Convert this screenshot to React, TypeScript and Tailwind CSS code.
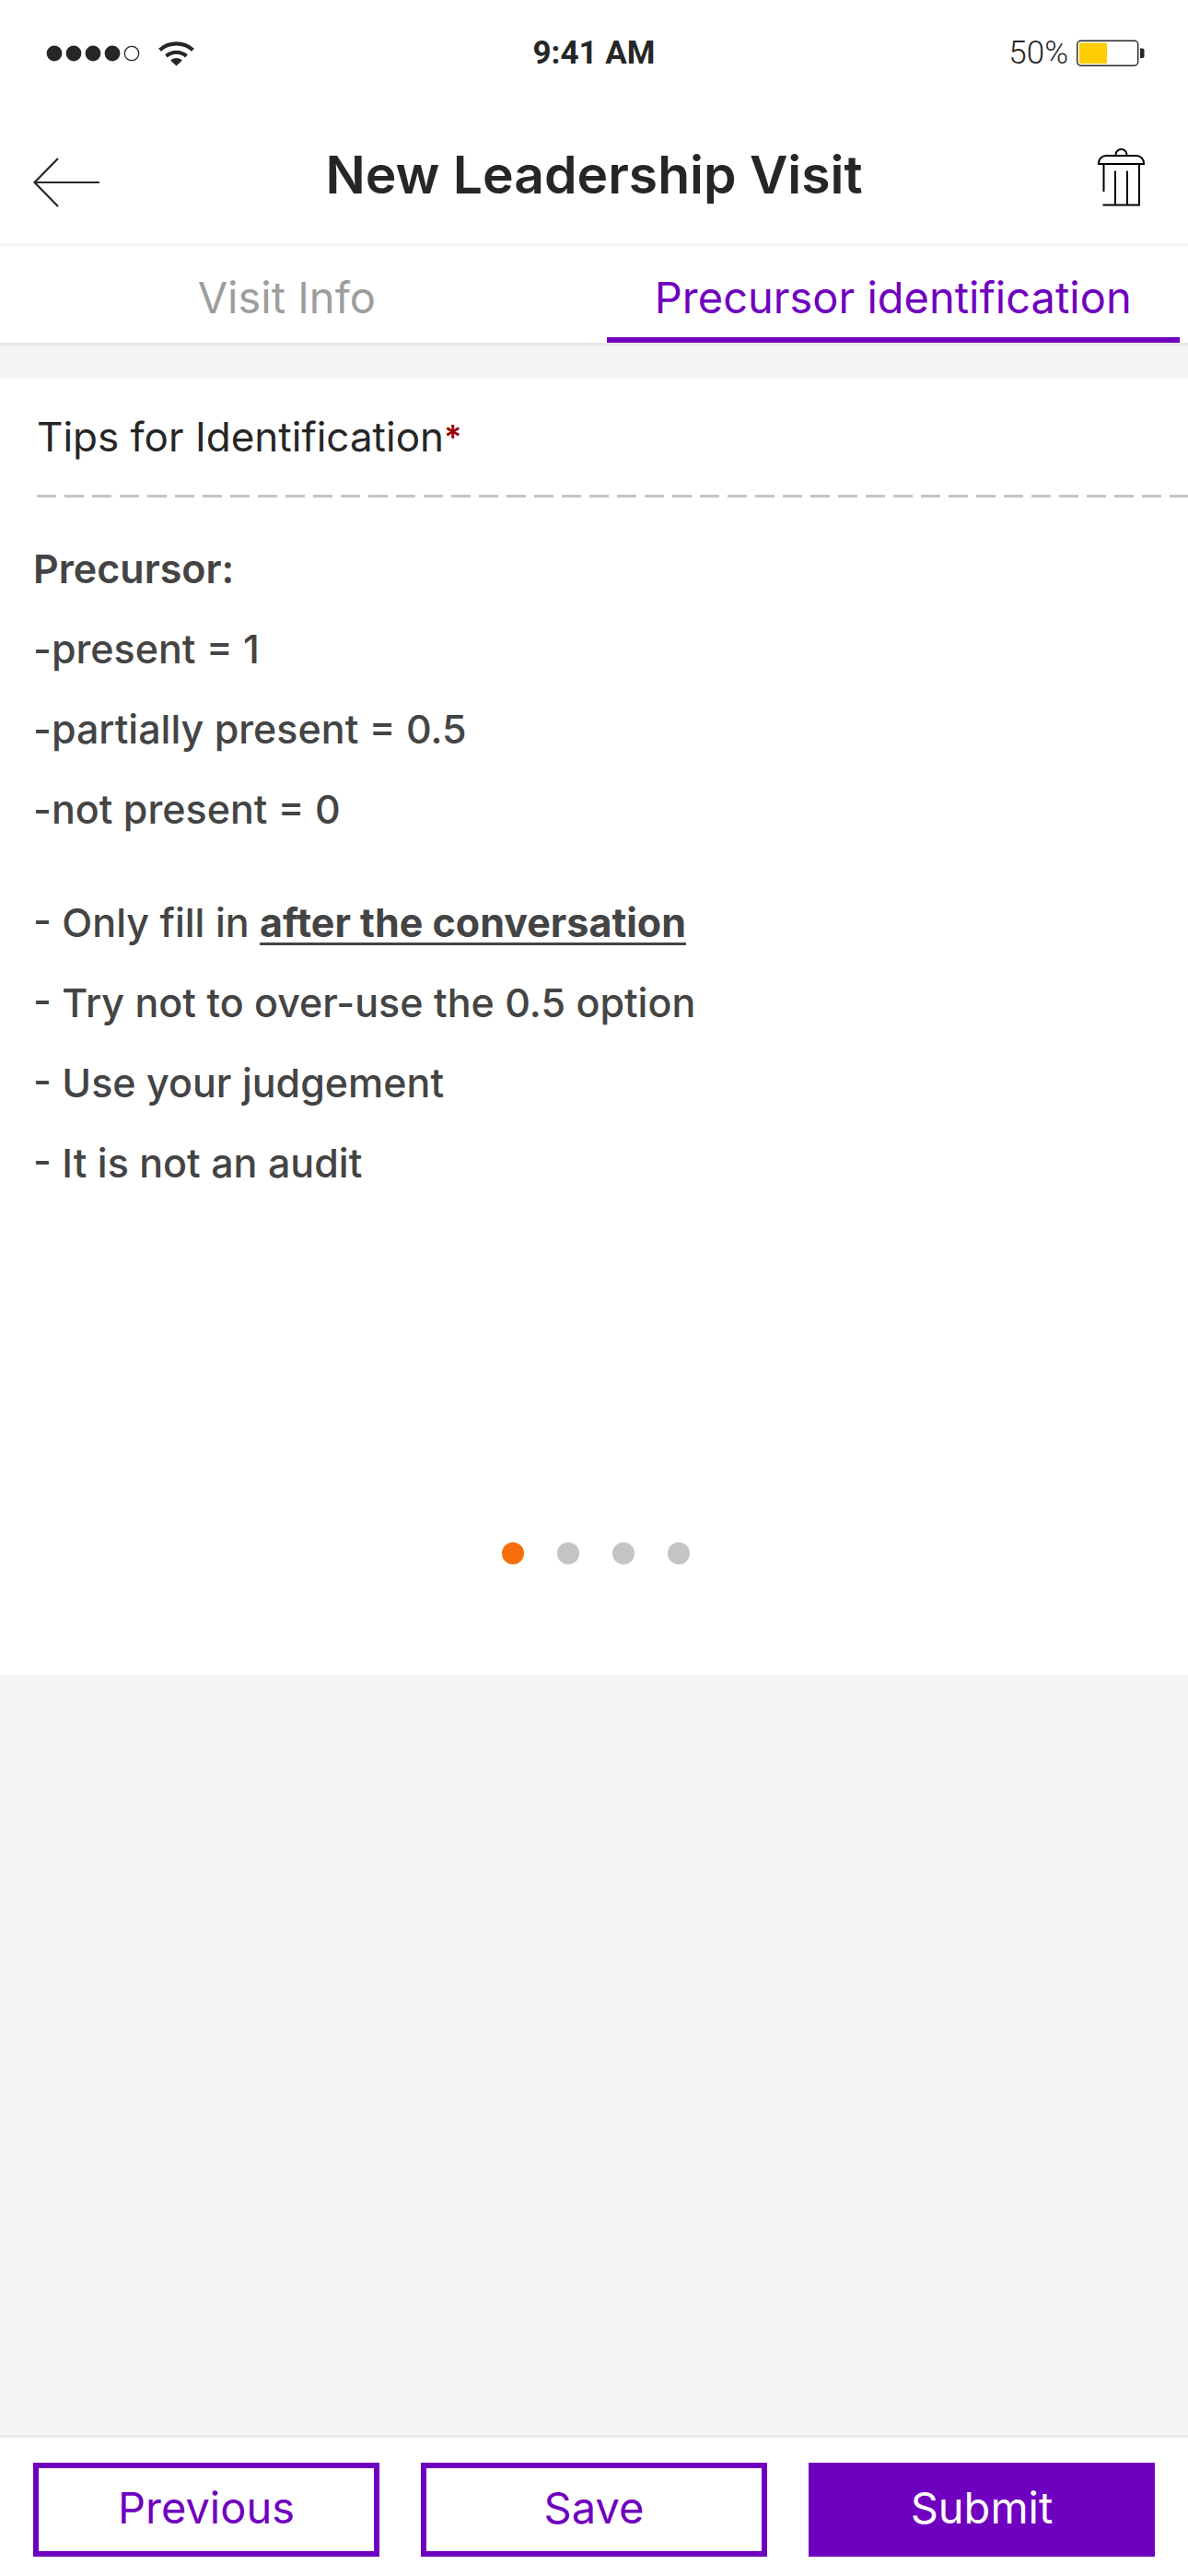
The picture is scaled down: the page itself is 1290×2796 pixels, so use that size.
import React, { useState } from 'react'

const tabs = ['Visit Info', 'Precursor identification']

const scores = ['-present = 1', '-partially present = 0.5', '-not present = 0']

const tips = ['- Try not to over-use the 0.5 option', '- Use your judgement', '- It is not an audit']

const StatusBar = () => (
  <div className="grid h-[116px] grid-cols-3 items-center px-[46px] font-['Roboto','Liberation_Sans',sans-serif] text-[35px] leading-10">
    <div className="flex items-center gap-5">
      {/* signal strength */}
      <svg width="106" height="20" viewBox="0 0 106 20" fill="#262626">
        <circle cx="13" cy="10" r="8.4" />
        <circle cx="34" cy="10" r="8.4" />
        <circle cx="55" cy="10" r="8.4" />
        <circle cx="76" cy="10" r="8.4" />
        <circle cx="97" cy="10" r="7.7" fill="none" stroke="#262626" strokeWidth="1.3" />
      </svg>
      <svg width="40" height="28" viewBox="0 0 40 28" fill="none" stroke="#262626" strokeWidth="4.2">
        <path d="M1.5 10.3a27 27 0 0 1 36 0" />
        <path d="M8.5 16.8a17 17 0 0 1 22 0" />
        <path d="M13.1 21.4a10 10 0 0 1 12.8 0L19.5 27.5z" fill="#262626" stroke="none" />
      </svg>
    </div>
    <span className="text-center font-bold">9:41 AM</span>
    <div className="flex items-center justify-end gap-2">
      <span className="font-light">50%</span>
      <svg width="76" height="30" viewBox="0 0 76 30">
        <rect x="1.7" y="1.2" width="66" height="27" rx="4" fill="none" stroke="#262626" strokeWidth="1.4" />
        <path d="M5 3.5h29v22.5H5a1 1 0 0 1-1-1v-20.5a1 1 0 0 1 1-1z" fill="#ffcc00" />
        <path d="M70 9.5h2.5a2 2 0 0 1 2 2v6.5a2 2 0 0 1-2 2H70z" fill="#262626" />
      </svg>
    </div>
  </div>
)

const Header = () => (
  <header className="flex h-[148px] items-center justify-between px-9">
    <button type="button" aria-label="Back">
      <svg width="76" height="72" viewBox="0 0 76 72" fill="none" stroke="#262626" strokeWidth="2.2">
        <path d="M1.5 44H72M27 18L1.5 44L27 70" />
      </svg>
    </button>
    <h1 className="text-[57px] leading-[72px] font-semibold">New Leadership Visit</h1>
    <button type="button" aria-label="Delete visit">
      <svg width="76" height="72" viewBox="-12 0 76 72" fill="none" stroke="#000000" strokeWidth="2">
        <path d="M21.5 14a6 6 0 0 1 12 0" />
        <path d="M3 24v-1a8 8 0 0 1 8-8h33a8 8 0 0 1 8 8v1z" />
        <path d="M8.5 24v30M7.5 68.5h39.5V24M21 31.5v37M34 31.5v37" />
      </svg>
    </button>
  </header>
)

const Tips = () => (
  <section className="bg-white pl-9">
    <h2 className="flex h-[126px] items-center px-1 text-[44px] leading-14">
      Tips for Identification
      <span className="text-4xl leading-14 font-semibold text-[#990000]">*</span>
    </h2>
    {/* dashed rule runs off the right edge */}
    <div className="ml-1 h-[3px] bg-[repeating-linear-gradient(to_right,#c4c4c4_0_21px,transparent_21px_30px)]" />
    <div className="flex min-h-[1134px] flex-col gap-9 pt-[34px] text-[43px] leading-[87px] font-medium text-[#444444]">
      <div>
        <p className="font-semibold">Precursor:</p>
        {scores.map((score) => (
          <p key={score}>{score}</p>
        ))}
      </div>
      <div>
        <p>
          - Only fill in{' '}
          <strong className="font-bold underline decoration-3 underline-offset-6">after the conversation</strong>
        </p>
        {tips.map((tip) => (
          <p key={tip}>{tip}</p>
        ))}
      </div>
    </div>
  </section>
)

const Pager = ({ count }: { count: number }) => {
  const [page, setPage] = useState(0)

  return (
    <div className="flex justify-center gap-9 bg-white pb-30 pl-1">
      {Array.from({ length: count }, (_, i) => (
        <button
          key={i}
          type="button"
          aria-label={`Page ${i + 1}`}
          onClick={() => setPage(i)}
          className={i === page ? 'size-6 rounded-full bg-[#f56e0a]' : 'size-6 rounded-full bg-[#c4c4c4]'}
        />
      ))}
    </div>
  )
}

const App: React.FC = () => {
  const [active, setActive] = useState(1)

  return (
    <div className="flex min-h-screen flex-col bg-[#f5f5f5] font-['Inter','Liberation_Sans',sans-serif] text-[#262626]">
      <div className="border-b-3 border-[#f5f5f5] bg-white">
        <StatusBar />
        <Header />
      </div>

      <nav className="grid grid-cols-2 gap-9 border-b-3 border-[#e9e9e9] bg-white pr-[9px]">
        {tabs.map((tab, i) => (
          <button
            key={tab}
            type="button"
            onClick={() => setActive(i)}
            className={
              i === active
                ? 'h-[105px] border-b-6 border-[#7000bf] pt-3 text-[47px] leading-14 text-[#7000bf]'
                : 'h-[105px] border-b-6 border-transparent pt-3 text-[47px] leading-14 text-[#9d9d9d]'
            }
          >
            {tab}
          </button>
        ))}
      </nav>

      <main className="flex-1 pt-9">
        <Tips />
        <Pager count={4} />
      </main>

      <footer className="grid grid-cols-3 gap-[45px] border-t-3 border-[#e9e9e9] bg-white px-9 pt-[27px] pb-[21px] text-[47px] leading-14 text-[#7000bf]">
        <button type="button" className="h-[102px] border-6 border-[#7000bf] pb-1">Previous</button>
        <button type="button" className="h-[102px] border-6 border-[#7000bf] pb-1">Save</button>
        <button type="button" className="h-[102px] border-6 border-[#7000bf] bg-[#7000bf] pb-1 text-white">Submit</button>
      </footer>
    </div>
  )
}

export default App
